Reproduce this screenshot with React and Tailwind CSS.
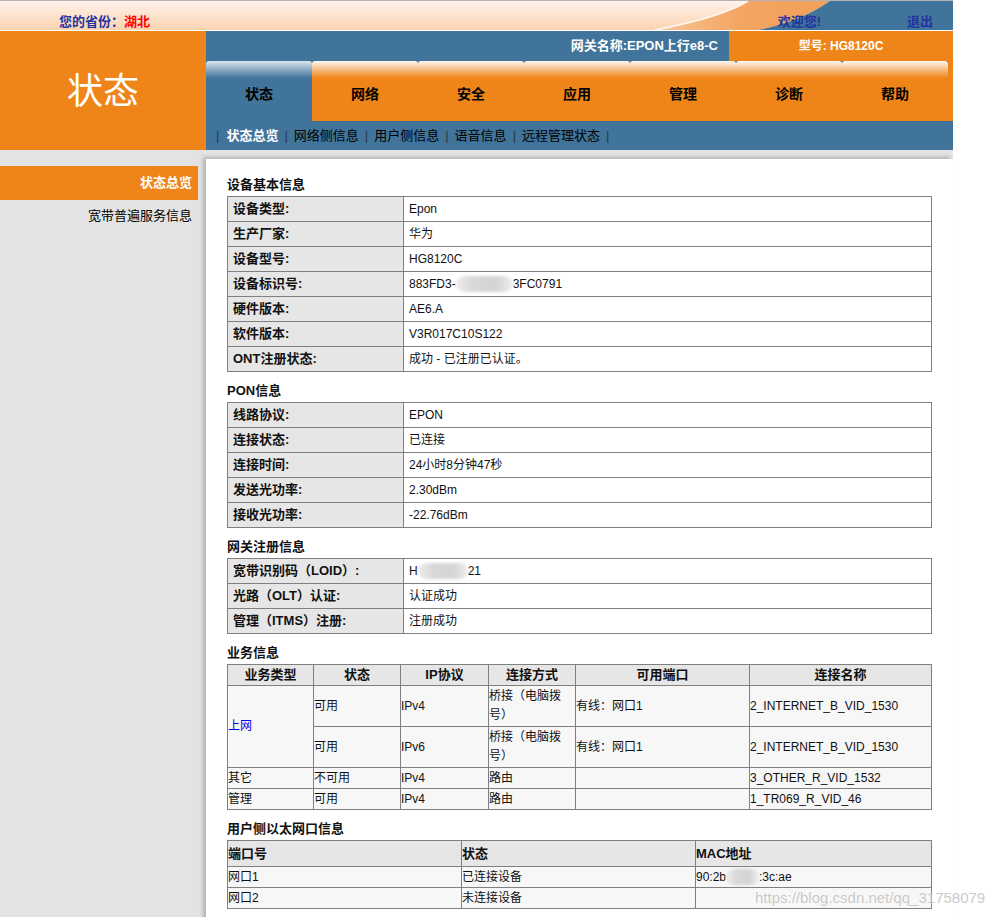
import React from "react";

function TopBand() {
  return (
    <div className="relative h-[31px] border-t border-t-[#b4b4b4] border-b border-b-white">
      <svg className="absolute left-0 top-0" width="953" height="29" viewBox="0 0 953 29" preserveAspectRatio="none">
        <defs>
          <linearGradient id="peach" x1="0" y1="0" x2="0" y2="1">
            <stop offset="0" stopColor="#fff2ea" />
            <stop offset="1" stopColor="#fbd3b1" />
          </linearGradient>
          <linearGradient id="orng" x1="0" y1="0" x2="1" y2="0">
            <stop offset="0" stopColor="#f8c597" />
            <stop offset="0.5" stopColor="#f3a562" />
            <stop offset="1" stopColor="#f0a059" />
          </linearGradient>
        </defs>
        <rect x="0" y="0" width="953" height="29" fill="url(#peach)" />
        <path d="M 748 0 L 830 0 Q 800 21 758 29 L 655 29 Q 722 16 748 0 Z" fill="url(#orng)" />
        <path d="M 748 0 Q 722 16 655 29" stroke="#fff4ec" strokeWidth="2" fill="none" />
        <path d="M 830 0 L 953 0 L 953 29 L 758 29 Q 800 21 830 0 Z" fill="#41749a" />
      </svg>
      <div className="relative flex items-end h-full text-[13px] font-bold leading-[16px]">
        <span className="ml-[59px] text-[#2233a0]">
          您的省份：<span className="text-[#ff0000]">湖北</span>
        </span>
        <span className="ml-auto text-[#2233a0]">欢迎您!</span>
        <span className="ml-[86px] mr-[20px] text-[#2233a0]">退出</span>
      </div>
    </div>
  );
}

function Sep({ first }) {
  return (
    <span className={first ? "text-[#2a3a44] mr-[7px]" : "text-[#2a3a44] mx-[6px]"}>|</span>
  );
}

function Header() {
  const tabs = ["网络", "安全", "应用", "管理", "诊断", "帮助"];
  return (
    <div className="flex h-[119px]">
      <div className="w-[206px] shrink-0 bg-[#ef8519] flex items-center justify-center text-white text-[36px] leading-none pt-[2px]">
        状态
      </div>
      <div className="flex-1 flex flex-col bg-[#41749a]">
        <div className="flex h-[30px]">
          <div className="w-[523px] flex items-center justify-end pr-[11px] text-white text-[13px] font-bold leading-[16px]">
            网关名称:EPON上行e8-C
          </div>
          <div className="flex-1 bg-[#ef8519] flex items-center justify-center text-white text-[12px] font-bold leading-[16px]">
            型号: HG8120C
          </div>
        </div>
        <div className="flex h-[60px]">
          <div className="w-[106px] h-full rounded-t-[3px] bg-[linear-gradient(to_bottom,#dbe5ed_0px,#41749a_17px)] flex items-center justify-center pt-[6px] text-[14px] font-bold text-black">
            状态
          </div>
          {tabs.map((t) => (
            <div
              key={t}
              className="w-[106px] h-full rounded-t-[3px] bg-[linear-gradient(to_bottom,#fff7f0_0px,#ef8519_17px)] flex items-center justify-center pt-[6px] text-[14px] font-bold text-black"
            >
              {t}
            </div>
          ))}
          <div className="flex-1 bg-[#ef8519]" />
        </div>
        <div className="h-[29px] flex items-center pl-[10px] text-[13px] leading-[16px] text-black">
          <Sep first />
          <span className="font-bold text-white">状态总览</span>
          <Sep />
          <span>网络侧信息</span>
          <Sep />
          <span>用户侧信息</span>
          <Sep />
          <span>语音信息</span>
          <Sep />
          <span>远程管理状态</span>
          <Sep />
        </div>
      </div>
    </div>
  );
}

function Sidebar() {
  return (
    <div className="w-[206px] shrink-0 pt-[16px]">
      <div className="w-[198px] h-[34px] bg-[#ef8519] text-white font-bold text-[13px] flex items-center justify-end pr-[6px]">
        状态总览
      </div>
      <div className="w-[198px] h-[32px] flex items-center justify-end pr-[6px] text-[13px] text-black">
        宽带普遍服务信息
      </div>
    </div>
  );
}

function Blur({ w }) {
  return (
    <span
      className="inline-block h-[16px] align-middle rounded-[8px] bg-[linear-gradient(to_right,#eeeeee,#d8d8d8_30%,#d4d4d4_70%,#eeeeee)] blur-[1.5px]"
      style={{ width: w }}
    />
  );
}

function Title({ children }) {
  return <div className="h-[18px] leading-[20px] text-[13px] font-bold text-[#111] mb-[3px]">{children}</div>;
}

function KVTable({ rows }) {
  return (
    <table className="w-[705px] border-collapse table-fixed">
      <colgroup>
        <col className="w-[176px]" />
        <col />
      </colgroup>
      <tbody>
        {rows.map(([k, v], i) => (
          <tr key={i}>
            <td className="h-[25px] border border-[#808080] bg-[#e6e6e6] px-[5px] py-0 text-[13px] font-bold leading-[16px] text-[#111]">
              {k}
            </td>
            <td className="h-[25px] border border-[#808080] bg-white px-[5px] py-0 text-[12px] leading-[16px] text-[#111]">
              {v}
            </td>
          </tr>
        ))}
      </tbody>
    </table>
  );
}

function ServiceTable() {
  const th = "h-[21px] border border-[#808080] bg-[#e6e6e6] p-0 text-[13px] font-bold leading-[16px] text-center text-[#111]";
  const td = "border border-[#808080] bg-[#f7f7f7] p-0 text-[12px] leading-[19px] text-left text-[#111]";
  return (
    <table className="w-[705px] border-collapse table-fixed">
      <colgroup>
        <col className="w-[86px]" />
        <col className="w-[87px]" />
        <col className="w-[88px]" />
        <col className="w-[87px]" />
        <col className="w-[174px]" />
        <col />
      </colgroup>
      <thead>
        <tr>
          <th className={th}>业务类型</th>
          <th className={th}>状态</th>
          <th className={th}>IP协议</th>
          <th className={th}>连接方式</th>
          <th className={th}>可用端口</th>
          <th className={th}>连接名称</th>
        </tr>
      </thead>
      <tbody>
        <tr>
          <td rowSpan={2} className="border border-[#808080] bg-[#f7f7f7] p-0 text-[12px] leading-[19px] text-left text-[#0000ee]">上网</td>
          <td className={td + " h-[41px]"}>可用</td>
          <td className={td}>IPv4</td>
          <td className={td}>桥接（电脑拨<br />号）</td>
          <td className={td}>有线：网口1</td>
          <td className={td}>2_INTERNET_B_VID_1530</td>
        </tr>
        <tr>
          <td className={td + " h-[41px]"}>可用</td>
          <td className={td}>IPv6</td>
          <td className={td}>桥接（电脑拨<br />号）</td>
          <td className={td}>有线：网口1</td>
          <td className={td}>2_INTERNET_B_VID_1530</td>
        </tr>
        <tr>
          <td className={td + " h-[21px]"}>其它</td>
          <td className={td}>不可用</td>
          <td className={td}>IPv4</td>
          <td className={td}>路由</td>
          <td className={td}></td>
          <td className={td}>3_OTHER_R_VID_1532</td>
        </tr>
        <tr>
          <td className={td + " h-[21px]"}>管理</td>
          <td className={td}>可用</td>
          <td className={td}>IPv4</td>
          <td className={td}>路由</td>
          <td className={td}></td>
          <td className={td}>1_TR069_R_VID_46</td>
        </tr>
      </tbody>
    </table>
  );
}

function PortTable() {
  const th = "h-[26px] border border-[#808080] bg-[#e6e6e6] p-0 text-[13px] font-bold leading-[16px] text-left text-[#111]";
  const td = "h-[21px] border border-[#808080] bg-[#f7f7f7] p-0 text-[12px] leading-[16px] text-left text-[#111]";
  return (
    <table className="w-[705px] border-collapse table-fixed">
      <colgroup>
        <col className="w-[234px]" />
        <col className="w-[234px]" />
        <col />
      </colgroup>
      <thead>
        <tr>
          <th className={th}>端口号</th>
          <th className={th}>状态</th>
          <th className={th}>MAC地址</th>
        </tr>
      </thead>
      <tbody>
        <tr>
          <td className={td}>网口1</td>
          <td className={td}>已连接设备</td>
          <td className={td}>
            90:2b<Blur w={33} />:3c:ae
          </td>
        </tr>
        <tr>
          <td className={td}>网口2</td>
          <td className={td}>未连接设备</td>
          <td className={td}></td>
        </tr>
      </tbody>
    </table>
  );
}

function Main() {
  return (
    <div className="w-[747px] shrink-0 mt-[9px] bg-white shadow-[-3px_-2px_4px_rgba(0,0,0,0.22)] pt-[16px] pl-[21px] pr-[21px] pb-[20px]">
      <Title>设备基本信息</Title>
      <KVTable
        rows={[
          ["设备类型:", "Epon"],
          ["生产厂家:", "华为"],
          ["设备型号:", "HG8120C"],
          ["设备标识号:", (<span>883FD3-<Blur w={57} />3FC0791</span>)],
          ["硬件版本:", "AE6.A"],
          ["软件版本:", "V3R017C10S122"],
          ["ONT注册状态:", "成功 - 已注册已认证。"],
        ]}
      />
      <div className="mt-[9px]">
        <Title>PON信息</Title>
        <KVTable
          rows={[
            ["线路协议:", "EPON"],
            ["连接状态:", "已连接"],
            ["连接时间:", "24小时8分钟47秒"],
            ["发送光功率:", "2.30dBm"],
            ["接收光功率:", "-22.76dBm"],
          ]}
        />
      </div>
      <div className="mt-[9px]">
        <Title>网关注册信息</Title>
        <KVTable
          rows={[
            ["宽带识别码（LOID）:", (<span>H<Blur w={50} />21</span>)],
            ["光路（OLT）认证:", "认证成功"],
            ["管理（ITMS）注册:", "注册成功"],
          ]}
        />
      </div>
      <div className="mt-[9px]">
        <Title>业务信息</Title>
        <ServiceTable />
      </div>
      <div className="mt-[9px]">
        <Title>用户侧以太网口信息</Title>
        <PortTable />
      </div>
    </div>
  );
}

export default function App() {
  return (
    <div className="relative w-[989px] min-h-[917px] bg-white font-['Liberation_Sans','Noto_Sans_CJK_SC',sans-serif] text-black overflow-hidden">
      <div className="w-[953px] flex flex-col min-h-[917px]">
        <TopBand />
        <Header />
        <div className="flex flex-1 bg-[#e3e3e3]">
          <Sidebar />
          <Main />
        </div>
      </div>
      <div className="absolute left-[755px] top-[888px] text-[15px] leading-[20px] text-[rgba(165,165,165,0.6)] [text-shadow:0_0_2px_rgba(255,255,255,0.9)] whitespace-nowrap">
        https://blog.csdn.net/qq_31758079
      </div>
    </div>
  );
}
